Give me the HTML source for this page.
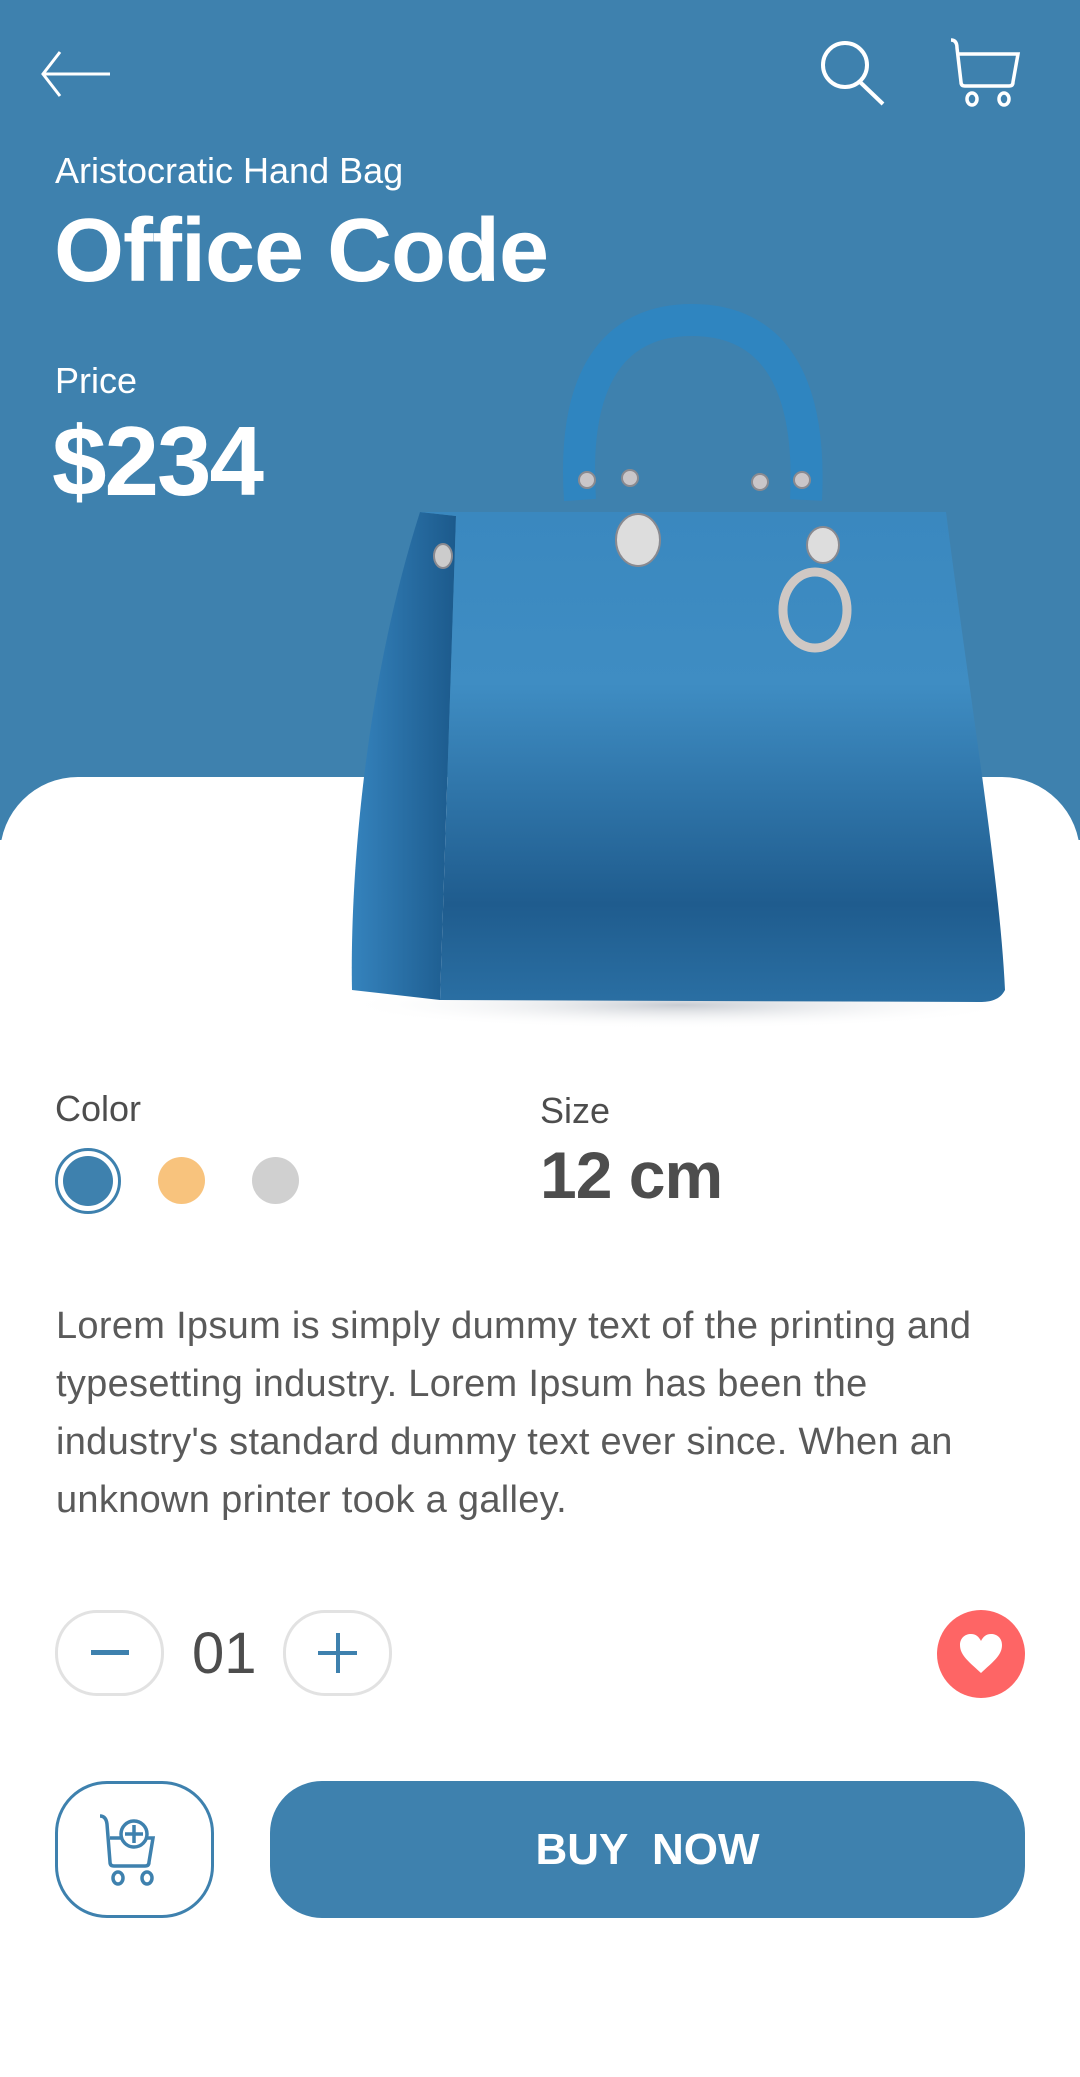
<!DOCTYPE html>
<html><head><meta charset="utf-8">
<style>
*{margin:0;padding:0;box-sizing:border-box}
body{width:1080px;height:2013px;position:relative;overflow:hidden;background:#fff;font-family:"Liberation Sans",Arial,sans-serif}
.hero{position:absolute;left:0;top:0;width:1080px;height:840px;background:#3e81ae}
.white{position:absolute;left:0;top:777px;width:1080px;height:1300px;background:#fff;border-radius:78px 78px 0 0}
.t{position:absolute;white-space:nowrap}
.w{color:#fff}
.g{color:#4d4d4d}
.p{color:#5a5a5a;font-size:38px;letter-spacing:0.3px;left:56px}
.qbox{position:absolute;top:1610px;width:109px;height:86px;border:3px solid #e2e2e2;border-radius:42px}
</style></head><body>
<div class="hero"></div>
<div class="white"></div>

<svg style="position:absolute;left:38px;top:46px" width="80" height="56" viewBox="0 0 80 56"><path d="M72 28H6M22 6L5 28L22 50" fill="none" stroke="#fff" stroke-width="3"/></svg>
<svg style="position:absolute;left:818px;top:36px" width="80" height="72" viewBox="0 0 80 72"><ellipse cx="27" cy="29" rx="22" ry="22" fill="none" stroke="#fff" stroke-width="4"/><path d="M42 46L65 68" stroke="#fff" stroke-width="4"/></svg>
<svg style="position:absolute;left:945px;top:36px" width="82" height="72" viewBox="0 0 82 72"><path d="M6 4Q12 4 12 12L16 46Q16 50 20 50H64Q68 50 68 46L73 18H14" fill="none" stroke="#fff" stroke-width="3.5"/><ellipse cx="27" cy="63" rx="5" ry="6" fill="none" stroke="#fff" stroke-width="3.5"/><ellipse cx="59" cy="63" rx="5" ry="6" fill="none" stroke="#fff" stroke-width="3.5"/></svg>

<div class="t w" style="left:55px;top:150px;font-size:36px">Aristocratic Hand Bag</div>
<div class="t w" style="left:54px;top:200px;font-size:90px;font-weight:bold;letter-spacing:-1px">Office Code</div>
<div class="t w" style="left:55px;top:360px;font-size:36px">Price</div>
<div class="t w" style="left:52px;top:405px;font-size:98px;font-weight:bold;letter-spacing:-2px">$234</div>

<svg style="position:absolute;left:330px;top:300px" width="720" height="740" viewBox="330 300 720 740">
<defs>
<linearGradient id="fr" x1="0" y1="0" x2="0" y2="1"><stop offset="0" stop-color="#3a88bf"/><stop offset="0.35" stop-color="#3f8dc3"/><stop offset="0.8" stop-color="#1f5c8e"/><stop offset="1" stop-color="#2a6fa3"/></linearGradient>
<linearGradient id="sd" x1="0" y1="0" x2="1" y2="0"><stop offset="0" stop-color="#3583bd"/><stop offset="1" stop-color="#1c5a8c"/></linearGradient>
<radialGradient id="sh" cx="0.5" cy="0.5" r="0.5"><stop offset="0" stop-color="#c8ccd2"/><stop offset="1" stop-color="#fff" stop-opacity="0"/></radialGradient>
</defs>
<ellipse cx="680" cy="1005" rx="340" ry="24" fill="url(#sh)"/>
<path d="M580 500 C572 380 612 320 692 320 C772 320 812 380 806 500" fill="none" stroke="#2f85c0" stroke-width="32"/>
<path d="M420 512 L456 516 L440 1000 L352 990 C350 900 360 700 420 512Z" fill="url(#sd)"/>
<path d="M420 512 L946 512 C970 700 1000 880 1005 990 C1000 1000 990 1002 980 1002 L440 1000 L456 516Z" fill="url(#fr)"/>
<g fill="#c9c6c9" stroke="#8a8a90" stroke-width="2">
<circle cx="587" cy="480" r="8"/><circle cx="630" cy="478" r="8"/><circle cx="760" cy="482" r="8"/><circle cx="802" cy="480" r="8"/>
<ellipse cx="638" cy="540" rx="22" ry="26" fill="#ddd"/>
<ellipse cx="823" cy="545" rx="16" ry="18" fill="#ddd"/>
<ellipse cx="815" cy="610" rx="32" ry="38" fill="none" stroke="#cfc8c4" stroke-width="9"/>
<ellipse cx="443" cy="556" rx="9" ry="12" fill="#ccc"/>
</g>
</svg>

<div class="t g" style="left:55px;top:1088px;font-size:36px">Color</div>
<div style="position:absolute;left:55px;top:1148px;width:66px;height:66px;border-radius:50%;border:3px solid #3e81ae;background:#fff"></div>
<div style="position:absolute;left:63px;top:1156px;width:50px;height:50px;border-radius:50%;background:#3e81ae"></div>
<div style="position:absolute;left:158px;top:1157px;width:47px;height:47px;border-radius:50%;background:#f8c37d"></div>
<div style="position:absolute;left:252px;top:1157px;width:47px;height:47px;border-radius:50%;background:#d0d0d0"></div>
<div class="t g" style="left:540px;top:1090px;font-size:36px">Size</div>
<div class="t g" style="left:540px;top:1137px;font-size:66px;font-weight:bold;letter-spacing:-1px">12 cm</div>

<div class="t p" style="top:1305px">Lorem Ipsum is simply dummy text of the printing and</div>
<div class="t p" style="top:1363px">typesetting industry. Lorem Ipsum has been the</div>
<div class="t p" style="top:1421px">industry's standard dummy text ever since. When an</div>
<div class="t p" style="top:1479px">unknown printer took a galley.</div>

<div class="qbox" style="left:55px"></div>
<div style="position:absolute;left:91px;top:1650px;width:38px;height:5px;background:#3e81ae"></div>
<div class="t g" style="left:192px;top:1620px;font-size:58px">01</div>
<div class="qbox" style="left:283px"></div>
<div style="position:absolute;left:318px;top:1651px;width:39px;height:4px;background:#3e81ae"></div>
<div style="position:absolute;left:336px;top:1633px;width:4px;height:40px;background:#3e81ae"></div>
<div style="position:absolute;left:937px;top:1610px;width:88px;height:88px;border-radius:50%;background:#fe6565"></div>
<svg style="position:absolute;left:958px;top:1633px" width="46" height="42" viewBox="0 0 46 42"><path d="M23 40C10 28 2 22 2 12C2 5 7 1 13 1C18 1 21 4 23 8C25 4 28 1 33 1C39 1 44 5 44 12C44 22 36 28 23 40Z" fill="#fff"/></svg>

<div style="position:absolute;left:55px;top:1781px;width:159px;height:137px;border:3px solid #3e81ae;border-radius:52px"></div>
<svg style="position:absolute;left:95px;top:1812px" width="80" height="76" viewBox="0 0 80 76"><path d="M5 4Q11 4 12 12L15 50Q15 54 19 54H50Q54 54 54 50L58 26H50M15 26H28" fill="none" stroke="#3e81ae" stroke-width="3.5"/><circle cx="39" cy="22" r="13" fill="none" stroke="#3e81ae" stroke-width="3.5"/><path d="M39 13V31M30 22H48" stroke="#3e81ae" stroke-width="3.5"/><ellipse cx="23" cy="66" rx="5" ry="6" fill="none" stroke="#3e81ae" stroke-width="3.5"/><ellipse cx="52" cy="66" rx="5" ry="6" fill="none" stroke="#3e81ae" stroke-width="3.5"/></svg>
<div style="position:absolute;left:270px;top:1781px;width:755px;height:137px;border-radius:52px;background:#3e81ae;color:#fff;font-size:44px;font-weight:bold;text-align:center;line-height:137px;white-space:pre">BUY  NOW</div>
</body></html>
